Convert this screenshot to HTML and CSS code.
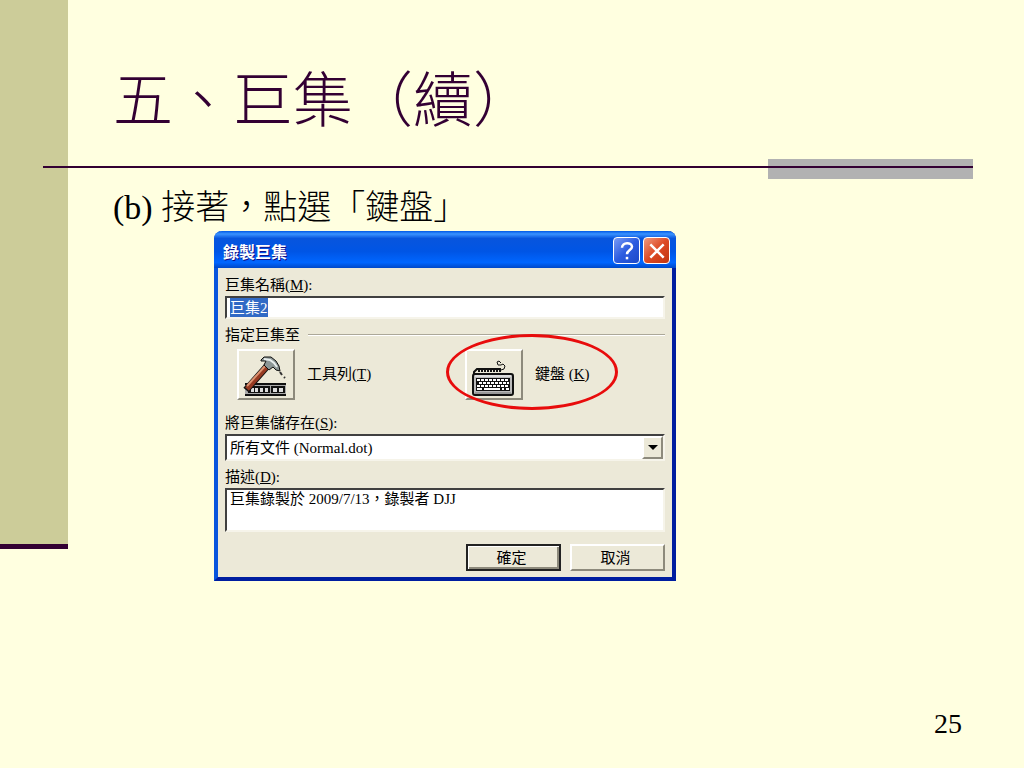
FILE: index.html
```html
<!DOCTYPE html>
<html lang="zh-Hant">
	<head>
		<meta charset="UTF-8">
		<title>五、巨集（續）</title>
		<link rel="stylesheet" href="styles.css">
	</head>
	<body>
		<div class="sidebar"></div>
		<main class="slide">
			<h1>五、巨集（續）</h1>
			<div class="rule"><span class="block"></span></div>
			<p class="step">(b) 接著，點選「鍵盤」</p>
			<form class="window">
				<div class="titlebar">
					<h2>錄製巨集</h2>
					<button type="button" class="help" aria-label="說明">
						<svg width="24" height="24" viewBox="0 0 24 24" fill="none" stroke="#fff" stroke-width="3">
							<path d="M6 8C6 1 18 1 18 7C18 11 12 11 12 16"/>
							<path d="M12 19V22"/>
						</svg>
					</button>
					<button type="button" class="close" aria-label="關閉">
						<svg width="24" height="24" viewBox="0 0 24 24" fill="none" stroke="#fff" stroke-width="3">
							<path d="M4 4L20 20M20 4L4 20"/>
						</svg>
					</button>
				</div>
				<div class="content">
					<label for="macro-name">巨集名稱(<u>M</u>):</label>
					<input id="macro-name" type="text" value="巨集2">
					<div class="legend">指定巨集至</div>
					<div class="targets">
						<div class="target">
							<button type="button" id="toolbar" class="tool">
								<svg width="54" height="46" viewBox="0 0 54 46" fill="none">
									<path fill="#aaa" d="M6 32H47V43H6z"/>
									<path stroke="#111" stroke-width="2" d="M6 32H47M6 43H47"/>
									<path fill="#111" d="M9 34H31V41H9zM32 34H46V41H32z"/>
									<path fill="#ddd" d="M12 36h3v4h-3zM16 36h3v4h-3zM21 36h3v4h-3zM26 36h3v4h-3zM34 36h4v4h-4zM40 36h4v4h-4z"/>
									<path stroke="#111" stroke-width="7" d="M7 38L30 12"/>
									<path stroke="#963a22" stroke-width="5" d="M8 37L30 12"/>
									<path stroke="#dc9270" stroke-width="2" d="M8 34L27 13"/>
									<path fill="#8c9696" stroke="#111" d="M22 8L25 5L32 5L37 9L40 14L41 19L37 18L34 15L30 18L25 13L27 9L22 9z"/>
									<path stroke="#e8eeee" stroke-width="2" d="M25 7L31 8L35 11L38 15"/>
									<path stroke="#333" stroke-width="2" d="M41 20L43 23M45 25L46 26"/>
								</svg>
							</button>
							<label for="toolbar">工具列(<u>T</u>)</label>
						</div>
						<div class="target marked">
							<button type="button" id="keyboard" class="tool">
								<svg width="54" height="46" viewBox="0 0 54 46" fill="none">
									<path stroke="#111" stroke-width="2" d="M7 22V20L10 17H34"/>
									<path stroke="#111" stroke-width="2" stroke-dasharray="2 1" d="M11 19H34"/>
									<path stroke="#111" d="M34 18L37 17L38 14L36 12L34 13L31 13L30 10L32 9L34 11"/>
									<rect x="6" y="22" width="40" height="21" rx="2" fill="#bbb" stroke="#111" stroke-width="2"/>
									<path stroke="#fff" d="M8 24H44"/>
									<path stroke="#777" d="M8 41H44"/>
									<path fill="#111" d="M9 26H43V39H9z"/>
									<path stroke="#fff" stroke-width="2" stroke-dasharray="3 1" d="M10 28H42M12 31H42M10 34H42"/>
									<path stroke="#fff" stroke-width="2" d="M10 37H15M17 37H33M35 37H37M39 37H42"/>
								</svg>
							</button>
							<label for="keyboard">鍵盤 (<u>K</u>)</label>
						</div>
					</div>
					<label for="store">將巨集儲存在(<u>S</u>):</label>
					<div class="dropdown">
						<select id="store">
							<option>所有文件 (Normal.dot)</option>
						</select>
						<span class="arrow"></span>
					</div>
					<label for="description" class="desc">描述(<u>D</u>):</label>
					<textarea id="description">巨集錄製於 2009/7/13，錄製者 DJJ</textarea>
					<div class="buttons">
						<button type="button" class="ok">確定</button>
						<button type="button">取消</button>
					</div>
				</div>
			</form>
			<footer>25</footer>
		</main>
		<script src="script.js"></script>
	</body>
</html>
```
FILE: styles.css
```css
*, *::before, *::after {
	box-sizing: border-box;
}
body {
	display: grid;
	grid-template-columns: 68px 1fr;
	min-height: 100vh;
	margin: 0;
	background-color: #ffffe0;
	color: #000;
	font-family: "Liberation Serif", "Noto Sans CJK TC", serif;
}
h1, h2, p {
	margin: 0;
	font-weight: normal;
}
.sidebar {
	height: 549px;
	background-color: #cccc99;
	border-bottom: 5px solid #330033;
}

.slide {
	display: flex;
	flex-direction: column;
	align-items: flex-start;
	padding: 60px 51px 24px 45px;
}
h1 {
	color: #330033;
	font-family: "Noto Sans CJK TC", sans-serif;
	font-size: 60px;
	font-weight: 300;
	line-height: 72px;
}
.rule {
	position: relative;
	display: flex;
	justify-content: flex-end;
	align-self: stretch;
	margin: 27px 0 6px -70px;
}
.rule::after {
	content: "";
	position: absolute;
	top: 7px;
	width: 100%;
	height: 2px;
	background-color: #330033;
}
.rule .block {
	width: 22%;
	height: 20px;
	background-color: #b2b2b2;
}
.step {
	font-size: 34px;
	font-weight: 300;
	line-height: 46px;
}

/* dialog */
.window {
	width: 462px;
	margin-left: 101px;
	border: 4px solid #0831d9;
	border-color: #0855dd #001ea0 #001ea0 #0855dd;
	border-top: none;
	border-radius: 8px 8px 0 0;
	background-color: #ece9d8;
	font-size: 15px;
}
.titlebar {
	display: flex;
	align-items: center;
	gap: 3px;
	height: 37px;
	margin: 0 -4px;
	padding: 2px 6px 0 9px;
	border-radius: 8px 8px 0 0;
	background: linear-gradient(#0058e6, #3a93ff 8%, #0855dd 20%, #0055e5 55%, #0066ff 85%, #0048c8);
}
.titlebar h2 {
	flex: 1;
	color: #fff;
	font-size: 16px;
	font-weight: bold;
	text-shadow: 1px 1px #0f1089;
}
.titlebar button {
	display: grid;
	place-items: center;
	width: 27px;
	height: 27px;
	padding: 0;
	border: 1px solid #fff;
	border-radius: 4px;
}
.help {
	background: linear-gradient(135deg, #7a9cf5, #2c5ce0 50%, #1c49c8);
}
.close {
	background: linear-gradient(135deg, #f09a80, #dd4a25 50%, #c13510);
}
.titlebar svg {
	width: 20px;
	height: 20px;
}
.content {
	display: flex;
	flex-direction: column;
	padding: 7px 7px 6px;
}
label, .legend {
	line-height: 20px;
}
label {
	padding-bottom: 1px;
}
label u {
	text-underline-offset: 1px;
}
input, select, textarea, button {
	margin: 0;
	color: #000;
	font: inherit;
}
input, select, textarea {
	width: 100%;
	padding: 0 3px;
	border: 2px solid;
	border-color: #404040 #f6f4ea #f6f4ea #404040;
	border-radius: 0;
	background-color: #fff;
	outline: none;
}
input {
	height: 23px;
	padding-bottom: 2px;
	line-height: 17px;
}
input::selection {
	background-color: #316ac5;
	color: #fff;
}
.legend {
	display: flex;
	align-items: center;
	gap: 8px;
	margin: 6px 0 4px;
}
.legend::after {
	content: "";
	flex: 1;
	height: 2px;
	border-top: 1px solid #aca899;
	border-bottom: 1px solid #fff;
}
.targets {
	display: grid;
	grid-template-columns: 228px 1fr;
	padding-left: 12px;
}
.target {
	display: flex;
	align-items: center;
	gap: 12px;
	margin-bottom: 13px;
}
.tool {
	width: 58px;
	height: 51px;
	padding: 0;
}
.tool svg {
	display: block;
}
.content button {
	border: 2px solid;
	border-color: #fff #8d8a7c #8d8a7c #fff;
	background-color: #ece9d8;
}
.marked {
	position: relative;
}
.marked::after {
	content: "";
	position: absolute;
	top: -15px;
	left: -19px;
	width: 172px;
	height: 76px;
	border: 3px solid #e80c0c;
	border-radius: 50%;
	pointer-events: none;
}
.dropdown {
	position: relative;
}
select {
	display: block;
	height: 27px;
	appearance: none;
}
.arrow {
	position: absolute;
	top: 2px;
	right: 2px;
	display: grid;
	place-items: center;
	width: 21px;
	height: 23px;
	border: 2px solid;
	border-color: #fff #8d8a7c #8d8a7c #fff;
	background-color: #ece9d8;
	pointer-events: none;
}
.arrow::after {
	content: "";
	border: 5px solid transparent;
	border-top-color: #000;
	border-bottom: none;
}
.desc {
	margin-top: 6px;
}
textarea {
	height: 44px;
	line-height: 18px;
	overflow: hidden;
	resize: none;
}
.buttons {
	display: flex;
	justify-content: flex-end;
	gap: 9px;
	margin-top: 12px;
}
.buttons button {
	width: 95px;
	height: 27px;
	padding: 0 4px 2px 0;
}
.buttons .ok {
	border-color: #222;
	box-shadow: inset 1px 1px #fff, inset -2px -2px #8d8a7c;
}

footer {
	align-self: flex-end;
	margin-top: auto;
	margin-right: 11px;
	font-size: 28px;
	line-height: 40px;
}
```
FILE: script.js
```js
const macroName = document.querySelector("#macro-name");
macroName.focus();
macroName.select();
```
